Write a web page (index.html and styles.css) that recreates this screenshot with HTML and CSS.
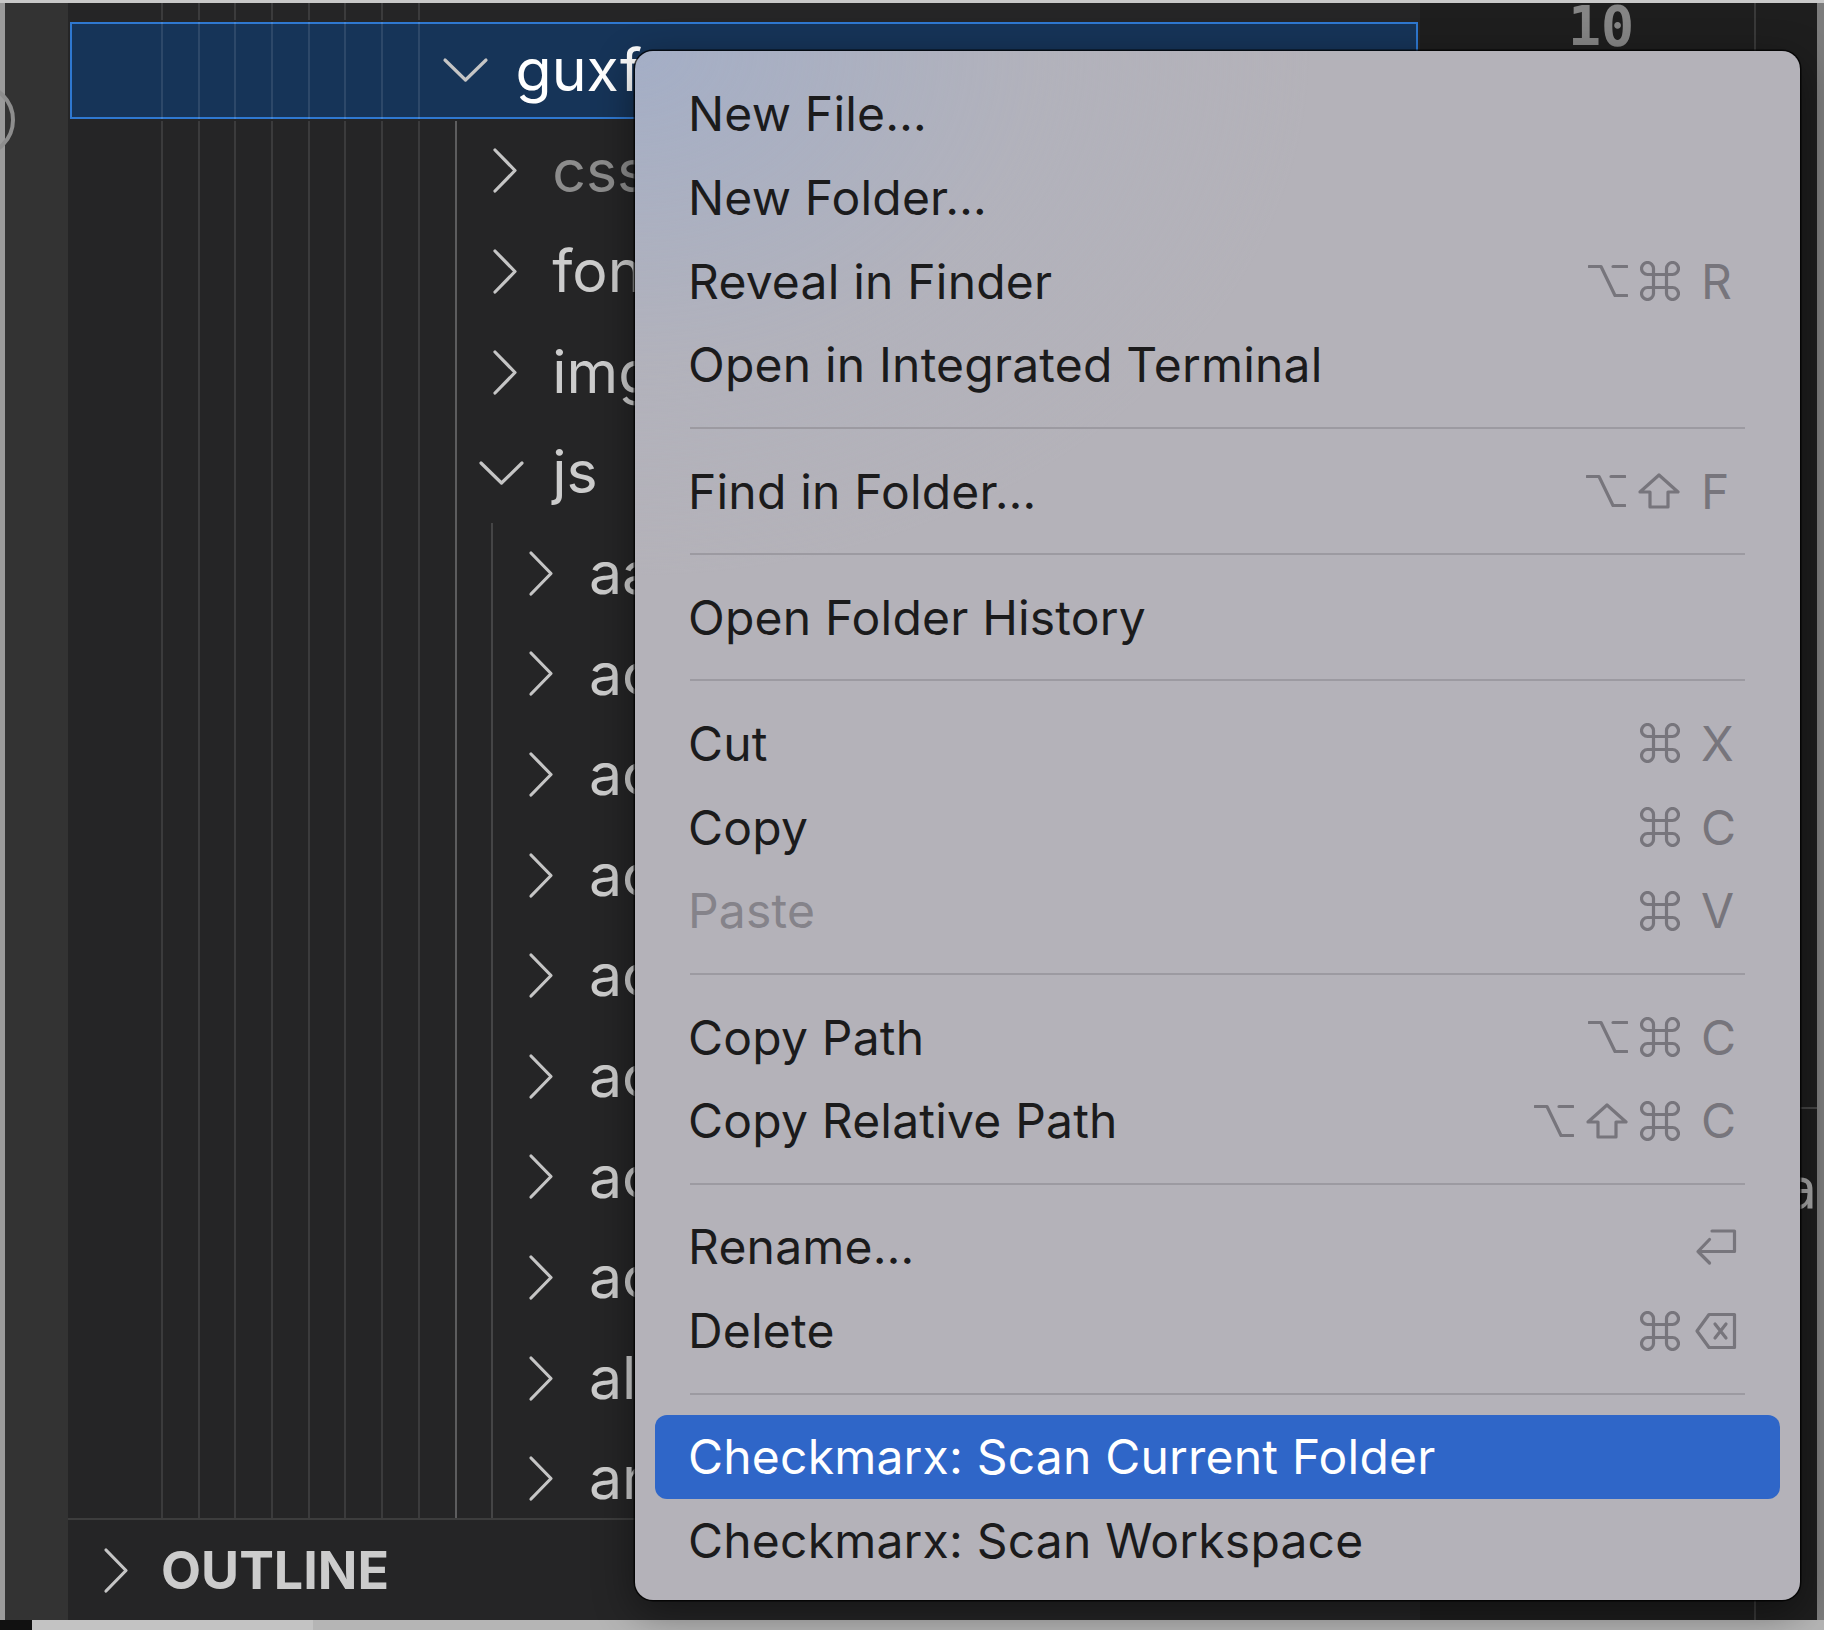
FILE: index.html
```html
<!DOCTYPE html>
<html lang="en">
<head>
<meta charset="utf-8">
<title>Explorer context menu</title>
<link rel="stylesheet" href="styles.css">
</head>
<body>
<div class="window">
  <div class="topline"></div>
  <div class="main">
    <div class="edge-left"></div>
    <div class="activity"></div>
    <svg class="acc-arc" width="20" height="100" viewBox="0 0 20 100"><circle cx="-22" cy="57" r="35" fill="none" stroke="#8e8e8e" stroke-width="4"/></svg>
    <div class="sidebar">
      <div class="tree">
        <div class="row row-top"><span class="pad"></span><span class="g"></span><span class="g"></span><span class="g"></span><span class="g"></span><span class="g"></span><span class="g"></span><span class="g"></span><span class="g"></span></div>

        <div class="row sel"><span class="pad"></span><span class="g"></span><span class="g"></span><span class="g"></span><span class="g"></span><span class="g"></span><span class="g"></span><span class="g"></span><span class="g"></span><span class="tw"><svg class="cd" width="47" height="26" viewBox="0 0 47 26"><path d="M3 3L23.5 23L44 3"/></svg></span><span class="lbl">guxfront</span></div>

        <div class="row"><span class="pad"></span><span class="g"></span><span class="g"></span><span class="g"></span><span class="g"></span><span class="g"></span><span class="g"></span><span class="g"></span><span class="g"></span><span class="g ga"></span><span class="tw"><svg class="cr" width="26" height="47" viewBox="0 0 26 47"><path d="M3 3L23 23.5L3 44"/></svg></span><span class="lbl dim">css</span></div>

        <div class="row"><span class="pad"></span><span class="g"></span><span class="g"></span><span class="g"></span><span class="g"></span><span class="g"></span><span class="g"></span><span class="g"></span><span class="g"></span><span class="g ga"></span><span class="tw"><svg class="cr" width="26" height="47" viewBox="0 0 26 47"><path d="M3 3L23 23.5L3 44"/></svg></span><span class="lbl">fonts</span></div>

        <div class="row"><span class="pad"></span><span class="g"></span><span class="g"></span><span class="g"></span><span class="g"></span><span class="g"></span><span class="g"></span><span class="g"></span><span class="g"></span><span class="g ga"></span><span class="tw"><svg class="cr" width="26" height="47" viewBox="0 0 26 47"><path d="M3 3L23 23.5L3 44"/></svg></span><span class="lbl">img</span></div>

        <div class="row"><span class="pad"></span><span class="g"></span><span class="g"></span><span class="g"></span><span class="g"></span><span class="g"></span><span class="g"></span><span class="g"></span><span class="g"></span><span class="g ga"></span><span class="tw"><svg class="cd" width="47" height="26" viewBox="0 0 47 26"><path d="M3 3L23.5 23L44 3"/></svg></span><span class="lbl">js</span></div>

        <div class="row"><span class="pad"></span><span class="g"></span><span class="g"></span><span class="g"></span><span class="g"></span><span class="g"></span><span class="g"></span><span class="g"></span><span class="g"></span><span class="g ga"></span><span class="g gb"></span><span class="tw"><svg class="cr" width="26" height="47" viewBox="0 0 26 47"><path d="M3 3L23 23.5L3 44"/></svg></span><span class="lbl">aa</span></div>

        <div class="row"><span class="pad"></span><span class="g"></span><span class="g"></span><span class="g"></span><span class="g"></span><span class="g"></span><span class="g"></span><span class="g"></span><span class="g"></span><span class="g ga"></span><span class="g gb"></span><span class="tw"><svg class="cr" width="26" height="47" viewBox="0 0 26 47"><path d="M3 3L23 23.5L3 44"/></svg></span><span class="lbl">ac</span></div>

        <div class="row"><span class="pad"></span><span class="g"></span><span class="g"></span><span class="g"></span><span class="g"></span><span class="g"></span><span class="g"></span><span class="g"></span><span class="g"></span><span class="g ga"></span><span class="g gb"></span><span class="tw"><svg class="cr" width="26" height="47" viewBox="0 0 26 47"><path d="M3 3L23 23.5L3 44"/></svg></span><span class="lbl">ac</span></div>

        <div class="row"><span class="pad"></span><span class="g"></span><span class="g"></span><span class="g"></span><span class="g"></span><span class="g"></span><span class="g"></span><span class="g"></span><span class="g"></span><span class="g ga"></span><span class="g gb"></span><span class="tw"><svg class="cr" width="26" height="47" viewBox="0 0 26 47"><path d="M3 3L23 23.5L3 44"/></svg></span><span class="lbl">ac</span></div>

        <div class="row"><span class="pad"></span><span class="g"></span><span class="g"></span><span class="g"></span><span class="g"></span><span class="g"></span><span class="g"></span><span class="g"></span><span class="g"></span><span class="g ga"></span><span class="g gb"></span><span class="tw"><svg class="cr" width="26" height="47" viewBox="0 0 26 47"><path d="M3 3L23 23.5L3 44"/></svg></span><span class="lbl">ac</span></div>

        <div class="row"><span class="pad"></span><span class="g"></span><span class="g"></span><span class="g"></span><span class="g"></span><span class="g"></span><span class="g"></span><span class="g"></span><span class="g"></span><span class="g ga"></span><span class="g gb"></span><span class="tw"><svg class="cr" width="26" height="47" viewBox="0 0 26 47"><path d="M3 3L23 23.5L3 44"/></svg></span><span class="lbl">ac</span></div>

        <div class="row"><span class="pad"></span><span class="g"></span><span class="g"></span><span class="g"></span><span class="g"></span><span class="g"></span><span class="g"></span><span class="g"></span><span class="g"></span><span class="g ga"></span><span class="g gb"></span><span class="tw"><svg class="cr" width="26" height="47" viewBox="0 0 26 47"><path d="M3 3L23 23.5L3 44"/></svg></span><span class="lbl">ac</span></div>

        <div class="row"><span class="pad"></span><span class="g"></span><span class="g"></span><span class="g"></span><span class="g"></span><span class="g"></span><span class="g"></span><span class="g"></span><span class="g"></span><span class="g ga"></span><span class="g gb"></span><span class="tw"><svg class="cr" width="26" height="47" viewBox="0 0 26 47"><path d="M3 3L23 23.5L3 44"/></svg></span><span class="lbl">ac</span></div>

        <div class="row"><span class="pad"></span><span class="g"></span><span class="g"></span><span class="g"></span><span class="g"></span><span class="g"></span><span class="g"></span><span class="g"></span><span class="g"></span><span class="g ga"></span><span class="g gb"></span><span class="tw"><svg class="cr" width="26" height="47" viewBox="0 0 26 47"><path d="M3 3L23 23.5L3 44"/></svg></span><span class="lbl">al</span></div>

        <div class="row"><span class="pad"></span><span class="g"></span><span class="g"></span><span class="g"></span><span class="g"></span><span class="g"></span><span class="g"></span><span class="g"></span><span class="g"></span><span class="g ga"></span><span class="g gb"></span><span class="tw"><svg class="cr" width="26" height="47" viewBox="0 0 26 47"><path d="M3 3L23 23.5L3 44"/></svg></span><span class="lbl">ar</span></div>
      </div>
      <div class="tree-sep"></div>
      <div class="outline-head">
        <svg class="oc" width="26" height="47" viewBox="0 0 26 47"><path d="M3 3L23 23.5L3 44"/></svg>
        <span>OUTLINE</span>
      </div>
    </div>
    <div class="editor">
      <div class="ln">10</div>
      <div class="ed-hr"></div>
      <div class="code">a</div>
    </div>
    <div class="edge-right"></div>
  </div>
  <div class="bottomline"><div class="bl-dark"></div><div class="bl-a"></div><div class="bl-b"></div></div>
</div>

<div class="menu">
  <div class="mi"><span class="ml">New File…</span></div>
  <div class="mi"><span class="ml">New Folder…</span></div>
  <div class="mi"><span class="ml">Reveal in Finder</span>
    <span class="sc"><span class="mods">
      <svg width="40" height="34" viewBox="0 0 40 34"><path d="M1 2.5H13L27 31.5H39M25 2.5H39"/></svg>
      <svg width="40" height="40" viewBox="-1.5 -1.5 40 40"><path d="M12 12H25V25H12Z M12 12V6A6 6 0 1 0 6 12H12 M25 12V6A6 6 0 1 1 31 12H25 M12 25V31A6 6 0 1 1 6 25H12 M25 25V31A6 6 0 1 0 31 25H25"/></svg>
    </span><span class="key">R</span></span></div>
  <div class="mi"><span class="ml">Open in Integrated Terminal</span></div>
  <div class="msep"></div>
  <div class="mi"><span class="ml">Find in Folder…</span>
    <span class="sc"><span class="mods">
      <svg width="40" height="34" viewBox="0 0 40 34"><path d="M1 2.5H13L27 31.5H39M25 2.5H39"/></svg>
      <svg width="42" height="36" viewBox="0 0 42 36"><path d="M21 2L40 19H30V34H12V19H2Z"/></svg>
    </span><span class="key">F</span></span></div>
  <div class="msep"></div>
  <div class="mi"><span class="ml">Open Folder History</span></div>
  <div class="msep"></div>
  <div class="mi"><span class="ml">Cut</span>
    <span class="sc"><span class="mods">
      <svg width="40" height="40" viewBox="-1.5 -1.5 40 40"><path d="M12 12H25V25H12Z M12 12V6A6 6 0 1 0 6 12H12 M25 12V6A6 6 0 1 1 31 12H25 M12 25V31A6 6 0 1 1 6 25H12 M25 25V31A6 6 0 1 0 31 25H25"/></svg>
    </span><span class="key">X</span></span></div>
  <div class="mi"><span class="ml">Copy</span>
    <span class="sc"><span class="mods">
      <svg width="40" height="40" viewBox="-1.5 -1.5 40 40"><path d="M12 12H25V25H12Z M12 12V6A6 6 0 1 0 6 12H12 M25 12V6A6 6 0 1 1 31 12H25 M12 25V31A6 6 0 1 1 6 25H12 M25 25V31A6 6 0 1 0 31 25H25"/></svg>
    </span><span class="key">C</span></span></div>
  <div class="mi dis"><span class="ml">Paste</span>
    <span class="sc"><span class="mods">
      <svg width="40" height="40" viewBox="-1.5 -1.5 40 40"><path d="M12 12H25V25H12Z M12 12V6A6 6 0 1 0 6 12H12 M25 12V6A6 6 0 1 1 31 12H25 M12 25V31A6 6 0 1 1 6 25H12 M25 25V31A6 6 0 1 0 31 25H25"/></svg>
    </span><span class="key">V</span></span></div>
  <div class="msep"></div>
  <div class="mi"><span class="ml">Copy Path</span>
    <span class="sc"><span class="mods">
      <svg width="40" height="34" viewBox="0 0 40 34"><path d="M1 2.5H13L27 31.5H39M25 2.5H39"/></svg>
      <svg width="40" height="40" viewBox="-1.5 -1.5 40 40"><path d="M12 12H25V25H12Z M12 12V6A6 6 0 1 0 6 12H12 M25 12V6A6 6 0 1 1 31 12H25 M12 25V31A6 6 0 1 1 6 25H12 M25 25V31A6 6 0 1 0 31 25H25"/></svg>
    </span><span class="key">C</span></span></div>
  <div class="mi"><span class="ml">Copy Relative Path</span>
    <span class="sc"><span class="mods">
      <svg width="40" height="34" viewBox="0 0 40 34"><path d="M1 2.5H13L27 31.5H39M25 2.5H39"/></svg>
      <svg width="42" height="36" viewBox="0 0 42 36"><path d="M21 2L40 19H30V34H12V19H2Z"/></svg>
      <svg width="40" height="40" viewBox="-1.5 -1.5 40 40"><path d="M12 12H25V25H12Z M12 12V6A6 6 0 1 0 6 12H12 M25 12V6A6 6 0 1 1 31 12H25 M12 25V31A6 6 0 1 1 6 25H12 M25 25V31A6 6 0 1 0 31 25H25"/></svg>
    </span><span class="key">C</span></span></div>
  <div class="msep"></div>
  <div class="mi"><span class="ml">Rename…</span>
    <span class="sc"><span class="key"><svg class="k-wide" width="42" height="38" viewBox="0 0 42 38"><path d="M17 3H39.5V23.5H3M14.5 11.5L3 23.5L14.5 35"/></svg></span></span></div>
  <div class="mi"><span class="ml">Delete</span>
    <span class="sc"><span class="mods">
      <svg width="40" height="40" viewBox="-1.5 -1.5 40 40"><path d="M12 12H25V25H12Z M12 12V6A6 6 0 1 0 6 12H12 M25 12V6A6 6 0 1 1 31 12H25 M12 25V31A6 6 0 1 1 6 25H12 M25 25V31A6 6 0 1 0 31 25H25"/></svg>
    </span><span class="key"><svg class="k-wide" width="42" height="38" viewBox="0 0 42 38"><path d="M14 2.5H39.5V35.5H14L2 19Z M20 12L31 26M31 12L20 26"/></svg></span></span></div>
  <div class="msep"></div>
  <div class="mi hl"><span class="ml">Checkmarx: Scan Current Folder</span></div>
  <div class="mi"><span class="ml">Checkmarx: Scan Workspace</span></div>
</div>
</body>
</html>
```

FILE: styles.css
```css
* { box-sizing: border-box; margin: 0; padding: 0; }

html, body {
  width: 1824px;
  height: 1630px;
  overflow: hidden;
  background: #1e1e1e;
}

body {
  position: relative;
  font-family: Inter, "Noto Sans", sans-serif;
}

.window {
  display: flex;
  flex-direction: column;
  width: 1824px;
  height: 1630px;
}

.topline { height: 3px; flex: none; background: #c9c9c9; }

.main {
  position: relative;
  display: flex;
  height: 1617px;
  flex: none;
}

.edge-left { width: 5px; flex: none; background: #9b9b9b; }
.activity { width: 63px; flex: none; background: #333333; }

.acc-arc {
  position: absolute;
  left: 0;
  top: 60px;
}

.sidebar {
  width: 1352px;
  flex: none;
  display: flex;
  flex-direction: column;
  background: #252526;
  overflow: hidden;
}

.tree { height: 1515px; flex: none; overflow: hidden; }

.row {
  display: flex;
  height: 100.6px;
  flex: none;
}
.row-top { height: 17px; }

.pad { width: 93px; flex: none; }
.g {
  width: 36.7px;
  flex: none;
  border-left: 2px solid rgba(255, 255, 255, 0.1);
}
.g.ga { border-left-color: rgba(255, 255, 255, 0.26); }
.g.gb { border-left-color: rgba(255, 255, 255, 0.15); }

.tw {
  width: 21px;
  flex: none;
  display: flex;
  align-items: center;
  justify-content: center;
}
.tw svg, .oc {
  flex: none;
  overflow: visible;
  fill: none;
  stroke: #c5c5c5;
  stroke-width: 3.2;
  stroke-linecap: round;
  stroke-linejoin: round;
}
.tw .cr { margin-left: 6px; }

.lbl {
  margin-left: 40px;
  font-size: 59px;
  line-height: 100.6px;
  color: #cccccc;
  white-space: nowrap;
}
.lbl.dim { color: #8c8c8c; }

.row.sel {
  background: #163458;
  background-clip: padding-box;
  border: 2px solid #252526;
  box-shadow: inset 0 0 0 2px #2f78d0;
}
.row.sel .pad { width: 91px; }
.row.sel .lbl { color: #ffffff; line-height: 96.6px; }

.tree-sep { height: 2px; flex: none; background: #3d3d3d; }

.outline-head {
  height: 100px;
  flex: none;
  display: flex;
  align-items: center;
  gap: 32px;
  padding-left: 35px;
}
.outline-head span {
  font-weight: 700;
  font-size: 52px;
  color: #cccccc;
}

.editor {
  width: 397px;
  flex: none;
  display: flex;
  flex-direction: column;
  overflow: hidden;
  background: linear-gradient(to right, transparent 334px, #393939 334px, #393939 336px, transparent 336px), #1e1e1e;
  font-family: "DejaVu Sans Mono", "Liberation Mono", monospace;
}
.ln {
  flex: none;
  height: 46px;
  padding-left: 148px;
  font-size: 55px;
  line-height: 46px;
  font-weight: 700;
  color: #858585;
}
.ed-hr { flex: none; height: 2px; margin-top: 1058px; background: #454545; }
.code {
  flex: none;
  margin-top: 48px;
  padding-left: 364px;
  font-size: 55px;
  line-height: 64px;
  color: #a9a9a9;
  white-space: nowrap;
}

.edge-right { width: 7px; flex: none; background: #7c7c7c; }

.bottomline { height: 10px; flex: none; display: flex; }
.bl-dark { width: 32px; background: #111111; }
.bl-a { width: 281px; background: #c3c3c3; }
.bl-b { flex: 1; background: #b5b5b5; }

/* context menu */
.menu {
  position: absolute;
  left: 635px;
  top: 51px;
  width: 1165px;
  padding: 21px 20px 18px;
  border-radius: 18px;
  background:
    radial-gradient(ellipse 900px 700px at 0 0, rgba(163, 174, 199, 0.95) 0%, rgba(176, 178, 190, 0.5) 45%, rgba(180, 178, 185, 0) 75%),
    #b4b2b9;
  box-shadow: 0 0 0 1.5px rgba(0, 0, 0, 0.75), 0 12px 40px rgba(0, 0, 0, 0.45);
  font-family: Inter, "Noto Sans", sans-serif;
  font-size: 48px;
  letter-spacing: 0.2px;
  color: #1b1b1c;
}

.mi {
  height: 83.7px;
  display: flex;
  align-items: center;
  padding: 0 43px 0 33px;
  border-radius: 12px;
  white-space: nowrap;
}
.ml { flex: 1; }
.mi.dis { color: #85838a; }
.mi.hl { background: #2f66c8; color: #ffffff; }

.msep {
  height: 42.5px;
  display: flex;
  align-items: center;
  padding: 0 35px;
}
.msep::before {
  content: "";
  flex: 1;
  height: 2px;
  background: #9c9aa1;
}

.sc {
  display: flex;
  align-items: center;
  color: #77757c;
}
.mods {
  display: flex;
  align-items: center;
  gap: 12px;
  margin-right: 21px;
}
.sc svg {
  flex: none;
  fill: none;
  stroke: currentColor;
  stroke-width: 3.2;
  stroke-linejoin: round;
  stroke-linecap: round;
}
.key {
  width: 36px;
  display: flex;
  align-items: center;
  justify-content: flex-start;
}
.key .k-wide { margin-left: -6px; }
```
